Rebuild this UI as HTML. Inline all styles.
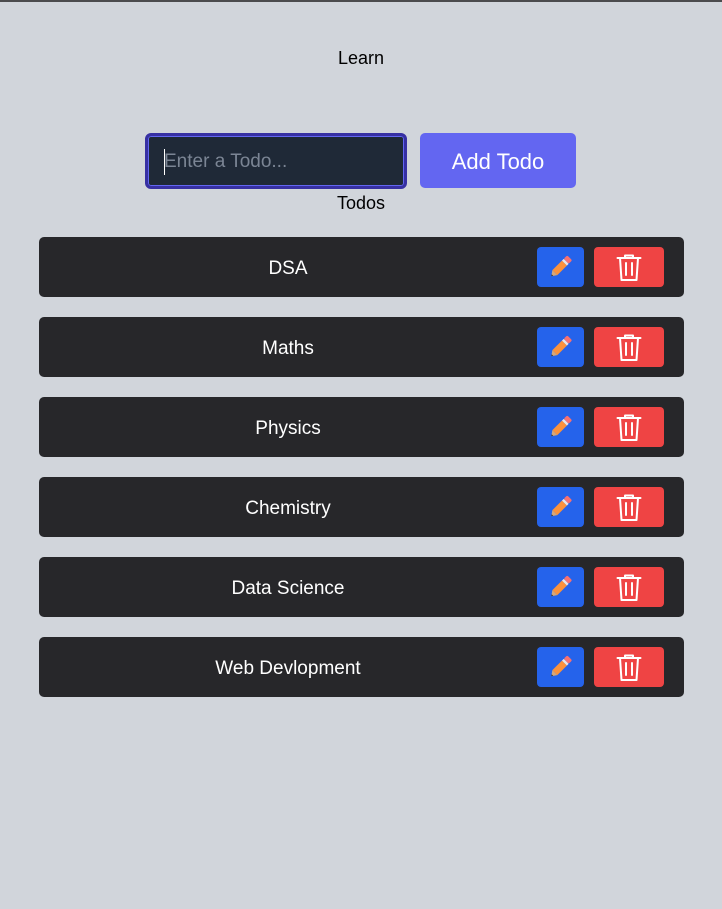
<!DOCTYPE html>
<html><head><meta charset="utf-8"><style>
*{box-sizing:border-box;margin:0;padding:0}
html,body{width:722px;height:909px;overflow:hidden}
body{background:#d1d5db;font-family:"Liberation Sans","DejaVu Sans",sans-serif;color:#000;border-top:2px solid #4b4b4d;position:relative}
.t{position:absolute;width:100%;text-align:center;font-size:18px}
.in{position:absolute;left:145px;top:131px;width:262px;height:56px;background:#1f2937;border:3px solid #3730a3;border-radius:6px;box-shadow:inset 0 0 0 1px #6366f1}
.in span{position:absolute;left:16px;top:15px;font-size:19px;color:#7b8594}
.in i{position:absolute;left:16px;top:13px;width:1px;height:26px;background:#fff}
.btn{position:absolute;left:420px;top:131px;width:156px;height:55px;background:#6366f1;border-radius:5px;color:#fff;font-size:22px;text-align:center;line-height:57px}
.row{position:absolute;left:39px;width:645px;height:60px;background:#27272a;border-radius:5px}
.row .l{position:absolute;left:0;width:498px;top:2px;line-height:60px;text-align:center;color:#fff;font-size:19px}
.e{position:absolute;left:498px;top:10px;width:47px;height:40px;background:#2563eb;border-radius:4px}
.d{position:absolute;left:555px;top:10px;width:70px;height:40px;background:#ef4444;border-radius:4px}
.e svg,.d svg{position:absolute;left:0;top:0}
</style></head><body>
<svg width="0" height="0" style="position:absolute">
<symbol id="p" viewBox="0 0 47 40"><g transform="rotate(45 23.5 20)"><rect x="20" y="7" width="7" height="5" rx="1.5" fill="#f87171"/><rect x="20" y="12" width="7" height="2.5" fill="#e5e7eb"/><rect x="20" y="14.5" width="7" height="13.5" fill="#fb923c"/><path d="M20 28 L27 28 L23.5 33 Z" fill="#d6a77a"/><path d="M22.4 31.4 L24.6 31.4 L23.5 33 Z" fill="#333"/></g></symbol>
<symbol id="tr" viewBox="0 0 70 40"><path d="M23.5 11h23M31 11V8.5h8V11M26 11l1.5 22h15L44 11M32 16v12M38 16v12" fill="none" stroke="#fff" stroke-width="2" stroke-linecap="round" stroke-linejoin="round"/></symbol>
</svg>
<div class="t" style="top:46px">Learn</div>
<div class="in"><i></i><span>Enter a Todo...</span></div>
<div class="btn">Add Todo</div>
<div class="t" style="top:191px">Todos</div>
<div class="row" style="top:235px"><div class="l">DSA</div><div class="e"><svg width="47" height="40"><use href="#p"/></svg></div><div class="d"><svg width="70" height="40"><use href="#tr"/></svg></div></div>
<div class="row" style="top:315px"><div class="l">Maths</div><div class="e"><svg width="47" height="40"><use href="#p"/></svg></div><div class="d"><svg width="70" height="40"><use href="#tr"/></svg></div></div>
<div class="row" style="top:395px"><div class="l">Physics</div><div class="e"><svg width="47" height="40"><use href="#p"/></svg></div><div class="d"><svg width="70" height="40"><use href="#tr"/></svg></div></div>
<div class="row" style="top:475px"><div class="l">Chemistry</div><div class="e"><svg width="47" height="40"><use href="#p"/></svg></div><div class="d"><svg width="70" height="40"><use href="#tr"/></svg></div></div>
<div class="row" style="top:555px"><div class="l">Data Science</div><div class="e"><svg width="47" height="40"><use href="#p"/></svg></div><div class="d"><svg width="70" height="40"><use href="#tr"/></svg></div></div>
<div class="row" style="top:635px"><div class="l">Web Devlopment</div><div class="e"><svg width="47" height="40"><use href="#p"/></svg></div><div class="d"><svg width="70" height="40"><use href="#tr"/></svg></div></div>
</body></html>
